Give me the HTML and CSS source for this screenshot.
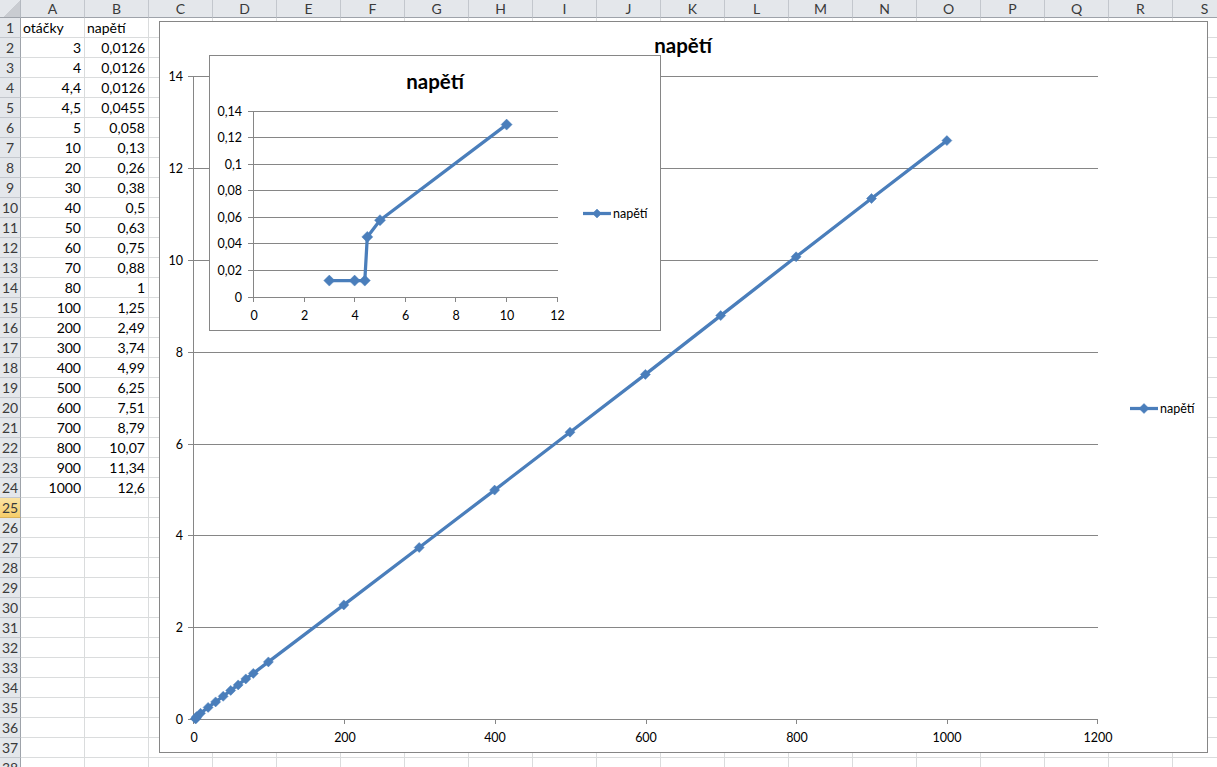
FILE: index.html
```html
<!DOCTYPE html>
<html lang="cs">
<head>
<meta charset="utf-8">
<title>List1</title>
<link rel="stylesheet" href="styles.css">
</head>
<body>
<div class="sheet">
  <div class="row head">
    <div class="corner"></div>
    <div class="ch">A</div><div class="ch">B</div><div class="ch">C</div><div class="ch">D</div><div class="ch">E</div><div class="ch">F</div><div class="ch">G</div><div class="ch">H</div><div class="ch">I</div><div class="ch">J</div><div class="ch">K</div><div class="ch">L</div><div class="ch">M</div><div class="ch">N</div><div class="ch">O</div><div class="ch">P</div><div class="ch">Q</div><div class="ch">R</div><div class="ch">S</div>
  </div>
  <div class="row"><div class="rh">1</div><div class="cell txt">otáčky</div><div class="cell txt">napětí</div><div class="rest"></div></div>
  <div class="row"><div class="rh">2</div><div class="cell">3</div><div class="cell">0,0126</div><div class="rest"></div></div>
  <div class="row"><div class="rh">3</div><div class="cell">4</div><div class="cell">0,0126</div><div class="rest"></div></div>
  <div class="row"><div class="rh">4</div><div class="cell">4,4</div><div class="cell">0,0126</div><div class="rest"></div></div>
  <div class="row"><div class="rh">5</div><div class="cell">4,5</div><div class="cell">0,0455</div><div class="rest"></div></div>
  <div class="row"><div class="rh">6</div><div class="cell">5</div><div class="cell">0,058</div><div class="rest"></div></div>
  <div class="row"><div class="rh">7</div><div class="cell">10</div><div class="cell">0,13</div><div class="rest"></div></div>
  <div class="row"><div class="rh">8</div><div class="cell">20</div><div class="cell">0,26</div><div class="rest"></div></div>
  <div class="row"><div class="rh">9</div><div class="cell">30</div><div class="cell">0,38</div><div class="rest"></div></div>
  <div class="row"><div class="rh">10</div><div class="cell">40</div><div class="cell">0,5</div><div class="rest"></div></div>
  <div class="row"><div class="rh">11</div><div class="cell">50</div><div class="cell">0,63</div><div class="rest"></div></div>
  <div class="row"><div class="rh">12</div><div class="cell">60</div><div class="cell">0,75</div><div class="rest"></div></div>
  <div class="row"><div class="rh">13</div><div class="cell">70</div><div class="cell">0,88</div><div class="rest"></div></div>
  <div class="row"><div class="rh">14</div><div class="cell">80</div><div class="cell">1</div><div class="rest"></div></div>
  <div class="row"><div class="rh">15</div><div class="cell">100</div><div class="cell">1,25</div><div class="rest"></div></div>
  <div class="row"><div class="rh">16</div><div class="cell">200</div><div class="cell">2,49</div><div class="rest"></div></div>
  <div class="row"><div class="rh">17</div><div class="cell">300</div><div class="cell">3,74</div><div class="rest"></div></div>
  <div class="row"><div class="rh">18</div><div class="cell">400</div><div class="cell">4,99</div><div class="rest"></div></div>
  <div class="row"><div class="rh">19</div><div class="cell">500</div><div class="cell">6,25</div><div class="rest"></div></div>
  <div class="row"><div class="rh">20</div><div class="cell">600</div><div class="cell">7,51</div><div class="rest"></div></div>
  <div class="row"><div class="rh">21</div><div class="cell">700</div><div class="cell">8,79</div><div class="rest"></div></div>
  <div class="row"><div class="rh">22</div><div class="cell">800</div><div class="cell">10,07</div><div class="rest"></div></div>
  <div class="row"><div class="rh">23</div><div class="cell">900</div><div class="cell">11,34</div><div class="rest"></div></div>
  <div class="row"><div class="rh">24</div><div class="cell">1000</div><div class="cell">12,6</div><div class="rest"></div></div>
  <div class="row"><div class="rh active">25</div><div class="cell"></div><div class="cell"></div><div class="rest"></div></div>
  <div class="row"><div class="rh">26</div><div class="cell"></div><div class="cell"></div><div class="rest"></div></div>
  <div class="row"><div class="rh">27</div><div class="cell"></div><div class="cell"></div><div class="rest"></div></div>
  <div class="row"><div class="rh">28</div><div class="cell"></div><div class="cell"></div><div class="rest"></div></div>
  <div class="row"><div class="rh">29</div><div class="cell"></div><div class="cell"></div><div class="rest"></div></div>
  <div class="row"><div class="rh">30</div><div class="cell"></div><div class="cell"></div><div class="rest"></div></div>
  <div class="row"><div class="rh">31</div><div class="cell"></div><div class="cell"></div><div class="rest"></div></div>
  <div class="row"><div class="rh">32</div><div class="cell"></div><div class="cell"></div><div class="rest"></div></div>
  <div class="row"><div class="rh">33</div><div class="cell"></div><div class="cell"></div><div class="rest"></div></div>
  <div class="row"><div class="rh">34</div><div class="cell"></div><div class="cell"></div><div class="rest"></div></div>
  <div class="row"><div class="rh">35</div><div class="cell"></div><div class="cell"></div><div class="rest"></div></div>
  <div class="row"><div class="rh">36</div><div class="cell"></div><div class="cell"></div><div class="rest"></div></div>
  <div class="row"><div class="rh">37</div><div class="cell"></div><div class="cell"></div><div class="rest"></div></div>
  <div class="row"><div class="rh">38</div><div class="cell"></div><div class="cell"></div><div class="rest"></div></div>

  <!-- Main chart: napětí vs otáčky, 0–1200 × 0–14 -->
  <svg class="chart chart-main" viewBox="159 21 1050 733" width="1050" height="733">
    <rect class="frame" x="159.5" y="21.5" width="1048" height="731"/>
    <text class="title" x="683" y="52.5" text-anchor="middle">napětí</text>
    <g class="grid">
      <path d="M193 76.5H1098M193 168.5H1098M193 260.5H1098M193 352.5H1098M193 444.5H1098M193 535.5H1098M193 627.5H1098"/>
      <path d="M193.5 76V719.5H1098"/>
      <path d="M188 76.5H193M188 168.5H193M188 260.5H193M188 352.5H193M188 444.5H193M188 535.5H193M188 627.5H193M188 719.5H193"/>
      <path d="M193.5 719V724M344.5 719V724M495.5 719V724M646.5 719V724M796.5 719V724M947.5 719V724M1097.5 719V724"/>
    </g>
    <g class="ylabels" text-anchor="end">
      <text x="183" y="80.5">14</text>
      <text x="183" y="172.5">12</text>
      <text x="183" y="264.5">10</text>
      <text x="183" y="356.5">8</text>
      <text x="183" y="448.5">6</text>
      <text x="183" y="539.5">4</text>
      <text x="183" y="631.5">2</text>
      <text x="183" y="723.5">0</text>
    </g>
    <g class="xlabels" text-anchor="middle">
      <text x="194" y="742">0</text>
      <text x="345" y="742">200</text>
      <text x="495" y="742">400</text>
      <text x="646" y="742">600</text>
      <text x="797" y="742">800</text>
      <text x="947" y="742">1000</text>
      <text x="1098" y="742">1200</text>
    </g>
    <polyline class="series" points="195.3,718.7 196.0,718.7 196.3,718.7 196.4,717.2 196.8,716.6 200.5,713.3 208.1,707.4 215.6,701.9 223.2,696.3 230.7,690.4 238.2,684.9 245.8,678.9 253.3,673.4 268.4,661.9 343.8,604.9 419.2,547.5 494.6,490.1 570.0,432.2 645.4,374.4 720.7,315.6 796.1,256.8 871.5,198.5 946.9,140.6"/>
    <g class="markers">
      <path d="M195.3 713.7l5 5l-5 5l-5 -5z"/>
      <path d="M196.0 713.7l5 5l-5 5l-5 -5z"/>
      <path d="M196.4 712.2l5 5l-5 5l-5 -5z"/>
      <path d="M196.8 711.6l5 5l-5 5l-5 -5z"/>
      <path d="M200.5 708.3l5 5l-5 5l-5 -5z"/>
      <path d="M208.1 702.4l5 5l-5 5l-5 -5z"/>
      <path d="M215.6 696.9l5 5l-5 5l-5 -5z"/>
      <path d="M223.2 691.3l5 5l-5 5l-5 -5z"/>
      <path d="M230.7 685.4l5 5l-5 5l-5 -5z"/>
      <path d="M238.2 679.9l5 5l-5 5l-5 -5z"/>
      <path d="M245.8 673.9l5 5l-5 5l-5 -5z"/>
      <path d="M253.3 668.4l5 5l-5 5l-5 -5z"/>
      <path d="M268.4 656.9l5 5l-5 5l-5 -5z"/>
      <path d="M343.8 599.9l5 5l-5 5l-5 -5z"/>
      <path d="M419.2 542.5l5 5l-5 5l-5 -5z"/>
      <path d="M494.6 485.1l5 5l-5 5l-5 -5z"/>
      <path d="M570.0 427.2l5 5l-5 5l-5 -5z"/>
      <path d="M645.4 369.4l5 5l-5 5l-5 -5z"/>
      <path d="M720.7 310.6l5 5l-5 5l-5 -5z"/>
      <path d="M796.1 251.8l5 5l-5 5l-5 -5z"/>
      <path d="M871.5 193.5l5 5l-5 5l-5 -5z"/>
      <path d="M946.9 135.6l5 5l-5 5l-5 -5z"/>
    </g>
    <g class="legend">
      <path class="series" d="M1130 408.5H1158"/>
      <path class="markers" d="M1144 403.5l5 5l-5 5l-5 -5z"/>
      <text x="1160" y="413">napětí</text>
    </g>
  </svg>

  <!-- Detail chart: the low-speed range, 0–12 × 0–0,14 -->
  <svg class="chart chart-detail" viewBox="209 55 453 277" width="453" height="277">
    <rect class="frame" x="209.5" y="55.5" width="451" height="275"/>
    <text class="title" x="435" y="89" text-anchor="middle">napětí</text>
    <g class="grid">
      <path d="M253 111.5H558M253 137.5H558M253 164.5H558M253 190.5H558M253 217.5H558M253 243.5H558M253 270.5H558"/>
      <path d="M253.5 111V297.5H558"/>
      <path d="M248 111.5H253M248 137.5H253M248 164.5H253M248 190.5H253M248 217.5H253M248 243.5H253M248 270.5H253M248 297.5H253"/>
      <path d="M253.5 297V302M304.5 297V302M354.5 297V302M405.5 297V302M455.5 297V302M506.5 297V302M557.5 297V302"/>
    </g>
    <g class="ylabels" text-anchor="end">
      <text x="242" y="115.5">0,14</text>
      <text x="242" y="141.5">0,12</text>
      <text x="242" y="168.5">0,1</text>
      <text x="242" y="194.5">0,08</text>
      <text x="242" y="221.5">0,06</text>
      <text x="242" y="247.5">0,04</text>
      <text x="242" y="274.5">0,02</text>
      <text x="242" y="301.5">0</text>
    </g>
    <g class="xlabels" text-anchor="middle">
      <text x="254" y="319.5">0</text>
      <text x="304.5" y="319.5">2</text>
      <text x="355" y="319.5">4</text>
      <text x="405.5" y="319.5">6</text>
      <text x="456" y="319.5">8</text>
      <text x="507" y="319.5">10</text>
      <text x="557.5" y="319.5">12</text>
    </g>
    <polyline class="series" points="329.3,280.6 354.6,280.6 364.8,280.6 367.3,236.9 380.0,220.2 506.6,124.6"/>
    <g class="markers">
      <path d="M329.3 275.1l5.5 5.5l-5.5 5.5l-5.5 -5.5z"/>
      <path d="M354.6 275.1l5.5 5.5l-5.5 5.5l-5.5 -5.5z"/>
      <path d="M364.8 275.1l5.5 5.5l-5.5 5.5l-5.5 -5.5z"/>
      <path d="M367.3 231.4l5.5 5.5l-5.5 5.5l-5.5 -5.5z"/>
      <path d="M380.0 214.7l5.5 5.5l-5.5 5.5l-5.5 -5.5z"/>
      <path d="M506.6 119.1l5.5 5.5l-5.5 5.5l-5.5 -5.5z"/>
    </g>
    <g class="legend">
      <path class="series" d="M583 213.5H611"/>
      <path class="markers" d="M597 209l4.5 4.5l-4.5 4.5l-4.5 -4.5z"/>
      <text x="613" y="218">napětí</text>
    </g>
  </svg>
</div>
</body>
</html>
```

FILE: styles.css
```css
html, body {
  margin: 0;
  padding: 0;
  background: #ffffff;
}

body {
  width: 1217px;
  height: 767px;
  overflow: hidden;
  font-family: Lato, "Liberation Sans", sans-serif;
  color: #000;
}

.sheet {
  position: relative;
  display: flex;
  flex-direction: column;
  width: 1217px;
}

.row {
  display: flex;
  height: 20px;
  flex: none;
}

.row.head {
  height: 18px;
}

/* Column / row headers */
.corner {
  width: 21px;
  flex: none;
  box-sizing: border-box;
  background: linear-gradient(135deg, #e4e7eb 55%, #c9ccd1 55%);
  border-right: 1px solid #b4b9c0;
  border-bottom: 1px solid #9ea3aa;
}

.ch {
  width: 64px;
  flex: none;
  box-sizing: border-box;
  background: #e4e7eb;
  border-right: 1px solid #c3c7cd;
  border-bottom: 1px solid #9ea3aa;
  font-size: 14px;
  line-height: 17px;
  text-align: center;
  color: #3a3a3a;
}

.rh {
  width: 21px;
  flex: none;
  box-sizing: border-box;
  background: #e4e7eb;
  border-right: 1px solid #9ea3aa;
  border-bottom: 1px solid #c3c7cd;
  font-size: 14px;
  line-height: 19px;
  text-align: center;
  color: #3a3a3a;
}

.rh.active {
  background: linear-gradient(#fbe4a4, #f6cd6a);
  border-bottom-color: #d9b25a;
}

/* Cells */
.cell {
  width: 64px;
  flex: none;
  box-sizing: border-box;
  border-right: 1px solid #dadcdd;
  border-bottom: 1px solid #dadcdd;
  font-size: 14px;
  line-height: 20px;
  text-align: right;
  padding: 0 3px 0 2px;
  white-space: nowrap;
  overflow: hidden;
}

.cell.txt {
  text-align: left;
}

.rest {
  flex: 1;
  box-sizing: border-box;
  border-bottom: 1px solid #dadcdd;
  background: repeating-linear-gradient(to right, transparent 0 63px, #dadcdd 63px 64px);
}

/* Charts floating over the sheet */
.chart {
  position: absolute;
  display: block;
  font-family: Lato, "Liberation Sans", sans-serif;
}

.chart-main {
  left: 159px;
  top: 21px;
}

.chart-detail {
  left: 209px;
  top: 55px;
}

.frame {
  fill: #ffffff;
  stroke: #868686;
  stroke-width: 1;
}

.title {
  font-size: 20.5px;
  font-weight: 700;
  fill: #000;
}

.grid path {
  fill: none;
  stroke: #868686;
  stroke-width: 1;
}

.ylabels text,
.xlabels text,
.legend text {
  font-size: 12.5px;
  fill: #000;
}

.series {
  fill: none;
  stroke: #4a7ebb;
  stroke-width: 3.25;
  stroke-linejoin: round;
}

.markers path,
path.markers {
  fill: #4a7ebb;
  stroke: #4a7ebb;
  stroke-width: 0.5;
}
```
